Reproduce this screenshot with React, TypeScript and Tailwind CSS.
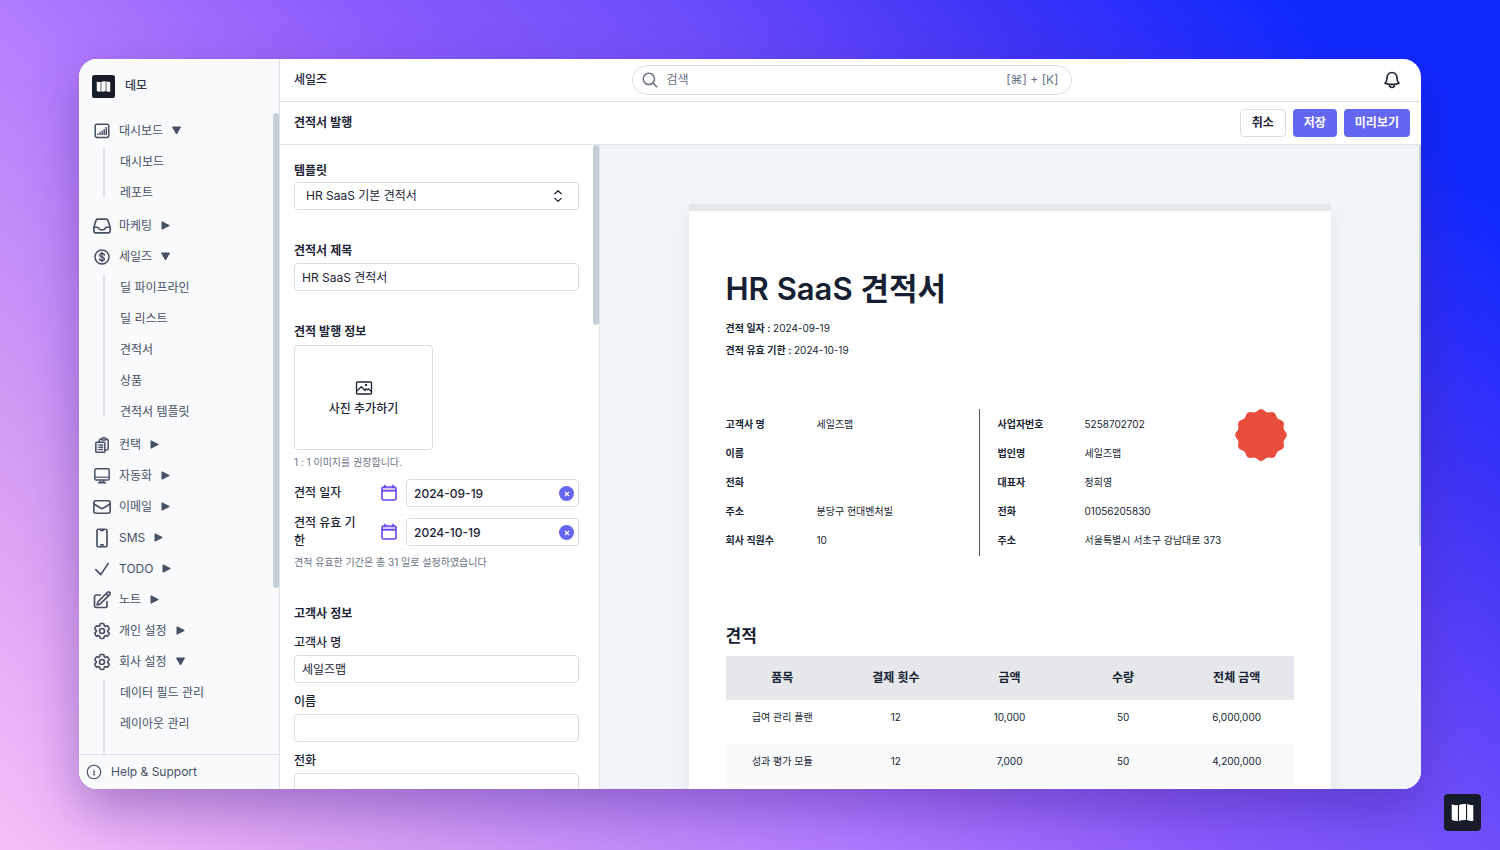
import type { ReactNode } from "react";
import {
  HiOutlineBell,
  HiOutlineCheck,
  HiOutlineCog6Tooth,
  HiOutlineClipboardDocumentList,
  HiOutlineDevicePhoneMobile,
  HiOutlineEnvelope,
  HiOutlineInbox,
  HiOutlineInformationCircle,
  HiOutlineMagnifyingGlass,
  HiOutlinePencilSquare,
} from "react-icons/hi2";

type MenuItem = {
  label: string;
  icon: ReactNode;
  open?: boolean;
  children?: string[];
};

const menu: MenuItem[] = [
  { label: "대시보드", icon: <ChartIcon />, open: true, children: ["대시보드", "레포트"] },
  { label: "마케팅", icon: <HiOutlineInbox className="size-5 stroke-2" /> },
  {
    label: "세일즈",
    icon: <DollarIcon />,
    open: true,
    children: ["딜 파이프라인", "딜 리스트", "견적서", "상품", "견적서 템플릿"],
  },
  { label: "컨택", icon: <HiOutlineClipboardDocumentList className="size-[18px] stroke-2" /> },
  { label: "자동화", icon: <MonitorIcon /> },
  { label: "이메일", icon: <HiOutlineEnvelope className="size-5 stroke-2" /> },
  { label: "SMS", icon: <HiOutlineDevicePhoneMobile className="size-5 stroke-2" /> },
  { label: "TODO", icon: <HiOutlineCheck className="size-5 stroke-2" /> },
  { label: "노트", icon: <HiOutlinePencilSquare className="size-5 stroke-2" /> },
  { label: "개인 설정", icon: <HiOutlineCog6Tooth className="size-5 stroke-2" /> },
  {
    label: "회사 설정",
    icon: <HiOutlineCog6Tooth className="size-5 stroke-2" />,
    open: true,
    children: ["데이터 필드 관리", "레이아웃 관리"],
  },
];

const customer = [
  ["고객사 명", "세일즈맵"],
  ["이름", ""],
  ["전화", ""],
  ["주소", "분당구 현대벤처빌"],
  ["회사 직원수", "10"],
];

const supplier = [
  ["사업자번호", "5258702702"],
  ["법인명", "세일즈맵"],
  ["대표자", "정희영"],
  ["전화", "01056205830"],
  ["주소", "서울특별시 서초구 강남대로 373"],
];

const columns = ["품목", "결제 횟수", "금액", "수량", "전체 금액"];

const products = [
  ["급여 관리 플랜", "12", "10,000", "50", "6,000,000"],
  ["성과 평가 모듈", "12", "7,000", "50", "4,200,000"],
];

// outline of the stamp: a circle with 12 bumps
const sealPoints = Array.from({ length: 144 }, (_, i) => {
  const angle = (i / 144) * Math.PI * 2;
  const r = 24.7 + 1.2 * Math.cos(12 * angle);
  return `${(26 + r * Math.cos(angle)).toFixed(2)},${(26 + r * Math.sin(angle)).toFixed(2)}`;
}).join(" ");

function ChartIcon() {
  return (
    <svg viewBox="0 0 20 20" className="size-5" fill="none" stroke="currentColor" strokeWidth="1.5">
      <rect x="3.2" y="3.2" width="13.6" height="13.2" rx="1.8" />
      <path d="M5.9 14v-1.6M8 14v-3M10.1 14V9.8M12.2 14V8M14.3 14V6" strokeWidth="1.4" />
    </svg>
  );
}

function DollarIcon() {
  return (
    <svg viewBox="0 0 20 20" className="size-5" fill="none" stroke="currentColor" strokeLinecap="round">
      <circle cx="10" cy="10" r="7" strokeWidth="1.5" />
      <path
        d="M12.4 8c-.2-1-1.1-1.5-2.4-1.5s-2.3.6-2.3 1.7c0 2.5 4.7 1.2 4.7 3.7 0 1-1.1 1.7-2.4 1.7s-2.3-.6-2.5-1.6"
        strokeWidth="1.5"
      />
      <path d="M10 5.2v9.6" strokeWidth="1.3" />
    </svg>
  );
}

function MonitorIcon() {
  return (
    <svg viewBox="0 0 20 20" className="size-5" fill="none" stroke="currentColor" strokeWidth="1.5" strokeLinejoin="round">
      <rect x="2.8" y="2.8" width="14.4" height="11.2" rx="1.6" />
      <path d="M3 11.2h14" strokeWidth="1.2" />
      <path d="M8.3 14.2v2h3.4v-2M6.5 16.8h7" strokeLinecap="round" />
    </svg>
  );
}

function CalendarIcon() {
  return (
    <svg viewBox="0 0 18 18" className="size-[18px]" fill="none" stroke="#6444ef" strokeWidth="1.6" strokeLinejoin="round">
      <path d="M2 3h14v3.6H2z" fill="#dccbfd" stroke="none" />
      <rect x="2" y="3" width="14" height="13" rx="1.6" />
      <path d="M2 6.8h14" />
      <path d="M5 1.4v2M13 1.4v2" strokeLinecap="round" />
    </svg>
  );
}

function PictureIcon() {
  return (
    <svg viewBox="0 0 18 18" className="size-[18px]" fill="none" stroke="currentColor" strokeWidth="1.3" strokeLinejoin="round">
      <rect x="1.5" y="3" width="15" height="12" rx="1" />
      <path d="M1.5 12.3 6.3 7.8l4.3 4.3M9.6 11l1.5-1.2 1.2 1 1.4-.9 2.8 2.6" />
      <circle cx="11" cy="6" r=".5" fill="currentColor" />
    </svg>
  );
}

function MapLogo({ className }: { className: string }) {
  return (
    <svg viewBox="0 0 36 36" className={className}>
      <rect width="36" height="36" rx="4" fill="#171c2b" />
      <path
        d="M7.5 10q3 1.2 6 .8v15.4q-3 .4-6-1.2zM14.6 10.6q3.5-1.4 6.8-.8v15.6q-3.3-.4-6.8.8zM22.5 9.8q3.3 1.4 6 1v15.4q-3 .3-6-.8z"
        fill="#fff"
      />
    </svg>
  );
}

function Seal() {
  return (
    <svg viewBox="0 0 52 52" className="size-[52px]">
      <polygon points={sealPoints} fill="#e84d3d" />
    </svg>
  );
}

function Caret({ open }: { open?: boolean }) {
  return (
    <svg viewBox="0 0 11 11" className="size-[11px]" fill="currentColor" stroke="currentColor" strokeLinejoin="round">
      <path d={open ? "M1.5 2h8l-4 7z" : "M2 1.8v7.4l7.3-3.7z"} />
    </svg>
  );
}

function Sidebar() {
  return (
    <aside className="flex w-[201px] shrink-0 flex-col border-r border-[#dfe2ea] bg-[#f8fafc] text-[#475065]">
      <div className="flex h-[54px] shrink-0 items-center gap-2.5 pl-[13px] text-[#30384a]">
        <MapLogo className="size-[23px]" />
        <span className="font-medium">데모</span>
      </div>
      <nav className="relative min-h-0 flex-1 overflow-hidden pt-0.5 pl-[13px]">
        <div className="absolute top-0 right-0 h-[475px] w-1.5 rounded-full bg-[#c5cfd8]" />
        {menu.map((item) => (
          <div key={item.label} className="group">
            <button type="button" className="flex h-[31px] items-center gap-2">
              <span className="-mr-px flex w-5 justify-center">{item.icon}</span>
              <span>{item.label}</span>
              <Caret open={item.open} />
            </button>
            {item.children && (
              <div className="ml-[11px] flex gap-[15px]">
                <div className="mt-0.5 mb-3 w-0.5 bg-[#e0e3ed]" />
                <ul className="pb-0.5 group-last:pb-8">
                  {item.children.map((child) => (
                    <li key={child}>
                      <a href="#" className="flex h-[31px] items-center">
                        {child}
                      </a>
                    </li>
                  ))}
                </ul>
              </div>
            )}
          </div>
        ))}
      </nav>
      <a href="#" className="flex h-[35px] shrink-0 items-center gap-2 border-t border-[#dcdfe9] pl-1.5">
        <HiOutlineInformationCircle className="size-[18px]" />
        Help &amp; Support
      </a>
    </aside>
  );
}

function TextField({ id, label, value = "" }: { id: string; label: string; value?: string }) {
  return (
    <div className="flex flex-col">
      <label htmlFor={id} className="mb-[3px] leading-[18px] font-medium">
        {label}
      </label>
      <input id={id} defaultValue={value} className="h-7 w-full rounded-[4px] border border-[#d8dce8] bg-white px-[7px] pb-0.5" />
    </div>
  );
}

function DateField({ id, label, value }: { id: string; label: string; value: string }) {
  return (
    <div className="flex items-center">
      <label htmlFor={id} className="w-[70px] leading-[18px] font-medium">
        {label}
      </label>
      <div className="ml-auto flex items-center gap-2">
        <CalendarIcon />
        <div className="relative">
          <input
            id={id}
            defaultValue={value}
            className="h-7 w-[173px] rounded-[4px] border border-[#d8dce8] px-[7px] font-medium"
          />
          <button
            type="button"
            aria-label={`${label} 지우기`}
            className="absolute top-[7px] right-[5px] flex size-[15px] items-center justify-center rounded-full bg-[#6366f1]"
          >
            <svg viewBox="0 0 8 8" className="size-2" stroke="#fff" strokeWidth="1.2">
              <path d="m2 2 4 4M6 2 2 6" />
            </svg>
          </button>
        </div>
      </div>
    </div>
  );
}

function QuoteForm() {
  return (
    <form className="relative w-[320px] shrink-0 overflow-hidden border-r border-[#dfe3eb] bg-white px-3.5 pt-[17px] text-[#1c2436]">
      <div className="mr-1.5">
        <label htmlFor="template" className="block leading-[18px] font-semibold">
          템플릿
        </label>
        <div className="relative mt-0.5">
          <select id="template" className="h-7 w-full appearance-none rounded-[4px] border border-[#d8dce8] bg-white px-[11px]">
            <option>HR SaaS 기본 견적서</option>
          </select>
          <svg
            viewBox="0 0 10 14"
            className="pointer-events-none absolute top-[7px] right-4 h-3.5 w-2.5"
            fill="none"
            stroke="currentColor"
            strokeWidth="1.3"
            strokeLinecap="round"
            strokeLinejoin="round"
          >
            <path d="m1.8 4.8 3.2-3 3.2 3M1.8 9.4l3.2 3 3.2-3" />
          </svg>
        </div>

        <label htmlFor="title" className="mt-8 block leading-[18px] font-semibold">
          견적서 제목
        </label>
        <input
          id="title"
          defaultValue="HR SaaS 견적서"
          className="mt-[3px] h-7 w-full rounded-[4px] border border-[#d8dce8] px-[7px] pb-0.5"
        />

        <h2 className="mt-8 leading-[18px] font-semibold">견적 발행 정보</h2>
        <button
          type="button"
          className="mt-1 flex h-[105px] w-[139px] flex-col items-center justify-center gap-1 rounded-[4px] border border-[#d8dce8] font-medium"
        >
          <PictureIcon />
          사진 추가하기
        </button>
        <p className="mt-1 text-[10px] leading-4 text-[#6b7385]">1 : 1 이미지를 권장합니다.</p>

        <div className="mt-[9px] flex flex-col gap-[7px]">
          <DateField id="issued" label="견적 일자" value="2024-09-19" />
          <DateField id="expires" label="견적 유효 기한" value="2024-10-19" />
        </div>
        <p className="mt-1 text-[10px] leading-4 text-[#6b7385]">견적 유효한 기간은 총 31 일로 설정하였습니다</p>

        <h2 className="mt-[35px] mb-[11px] leading-[18px] font-semibold">고객사 정보</h2>
        <div className="flex flex-col gap-2.5">
          <TextField id="company" label="고객사 명" value="세일즈맵" />
          <TextField id="name" label="이름" />
          <TextField id="phone" label="전화" />
        </div>
      </div>
      <div className="absolute top-0 right-0 h-[180px] w-1.5 rounded-full bg-[#c5cfd8]" />
    </form>
  );
}

function InfoList({ rows, className }: { rows: string[][]; className: string }) {
  return (
    <dl className={className}>
      {rows.map(([term, value]) => (
        <div key={term} className="contents">
          <dt className="font-semibold">{term}</dt>
          <dd>{value}</dd>
        </div>
      ))}
    </dl>
  );
}

function QuotePreview() {
  return (
    <section className="relative min-w-0 flex-1 overflow-hidden bg-[#f1f5f9] pt-[59px] pr-[18px] pl-4 text-[#171f33]">
      <article className="mx-auto min-h-full max-w-[642px] border-t-[7px] border-[#e5e7eb] bg-white px-[37px] pt-[58px] text-[10px] shadow-[0_10px_16px_rgba(100,116,139,0.12)]">
        <h1 className="text-[31px] leading-10 font-semibold">HR SaaS 견적서</h1>
        <p className="mt-2 leading-[22px]">
          <b className="font-semibold">견적 일자 : </b>2024-09-19
        </p>
        <p className="leading-[22px]">
          <b className="font-semibold">견적 유효 기한 : </b>2024-10-19
        </p>

        <div className="mt-12 flex leading-[29px]">
          <InfoList rows={customer} className="grid w-[254px] grid-cols-[91px_1fr] border-r border-[#4b5563] py-px" />
          <InfoList rows={supplier} className="grid flex-1 grid-cols-[87px_1fr] py-px pl-[18px]" />
          <div className="-ml-[59px] w-[59px]">
            <Seal />
          </div>
        </div>

        <h2 className="mt-[68px] text-[17px] leading-6 font-semibold">견적</h2>
        <table className="mt-2 w-full table-fixed text-center">
          <thead>
            <tr className="h-11 bg-[#e5e7eb] text-xs">
              {columns.map((column) => (
                <th key={column} className="font-semibold">
                  {column}
                </th>
              ))}
            </tr>
          </thead>
          <tbody>
            {products.map((row) => (
              <tr key={row[0]} className="h-11 even:bg-[#f9fafb]">
                {row.map((cell, i) => (
                  <td key={i} className="pb-2">
                    {cell}
                  </td>
                ))}
              </tr>
            ))}
          </tbody>
        </table>
      </article>
      <div className="absolute top-0 right-0 h-[401px] w-0.5 bg-[#c5cfd8]" />
    </section>
  );
}

export default function App() {
  return (
    <div className="relative flex h-screen bg-[linear-gradient(45deg,#f6c0f8_0%,#e4aaf5_10%,#cf98f4_20%,#b27cfe_36%,#8a5cfb_51%,#6e4efa_64%,#3e34f6_78%,#1029ff_91%)] px-[79px] pt-[59px] pb-[61px] font-['Inter','Noto_Sans_CJK_KR',sans-serif] text-xs">
      <div className="flex min-w-0 flex-1 rounded-[18px] shadow-[0_20px_50px_rgba(50,20,120,0.35)]">
        <div className="flex min-w-0 flex-1 overflow-hidden rounded-[18px] bg-white">
          <Sidebar />
          <main className="flex min-w-0 flex-1 flex-col">
            <header className="grid h-[43px] shrink-0 grid-cols-[1fr_440px_1fr] items-center border-b border-[#d9dee6] pr-3 pl-3.5">
              <span className="font-medium text-[#1c2436]">세일즈</span>
              <label className="flex h-[30px] items-center rounded-full border border-[#d9deea] px-2 text-[#6b7385]">
                <HiOutlineMagnifyingGlass className="size-[18px] stroke-2" />
                <input aria-label="검색" placeholder="검색" className="ml-2 min-w-0 flex-1 placeholder:text-[#6b7385]" />
                <span className="pr-1">[⌘] + [K]</span>
              </label>
              <button type="button" aria-label="알림" className="mr-[7px] justify-self-end text-[#1c2436]">
                <HiOutlineBell className="size-5 stroke-2" />
              </button>
            </header>
            <div className="flex h-[43px] shrink-0 items-center gap-[7px] border-b border-[#e2e4ec] pr-[11px] pl-3.5 font-semibold text-[#1c2436]">
              <h1 className="mr-auto">견적서 발행</h1>
              <button type="button" className="h-7 rounded-[4px] border border-[#d8dce8] px-[11px]">
                취소
              </button>
              <button type="button" className="h-7 rounded-[4px] bg-[#6366f1] px-[11px] text-white">
                저장
              </button>
              <button type="button" className="h-7 rounded-[4px] bg-[#6366f1] px-[11px] text-white">
                미리보기
              </button>
            </div>
            <div className="flex min-h-0 flex-1">
              <QuoteForm />
              <QuotePreview />
            </div>
          </main>
        </div>
      </div>
      <button type="button" aria-label="도움말" className="absolute right-[19px] bottom-[19px]">
        <MapLogo className="size-[37px]" />
      </button>
    </div>
  );
}
